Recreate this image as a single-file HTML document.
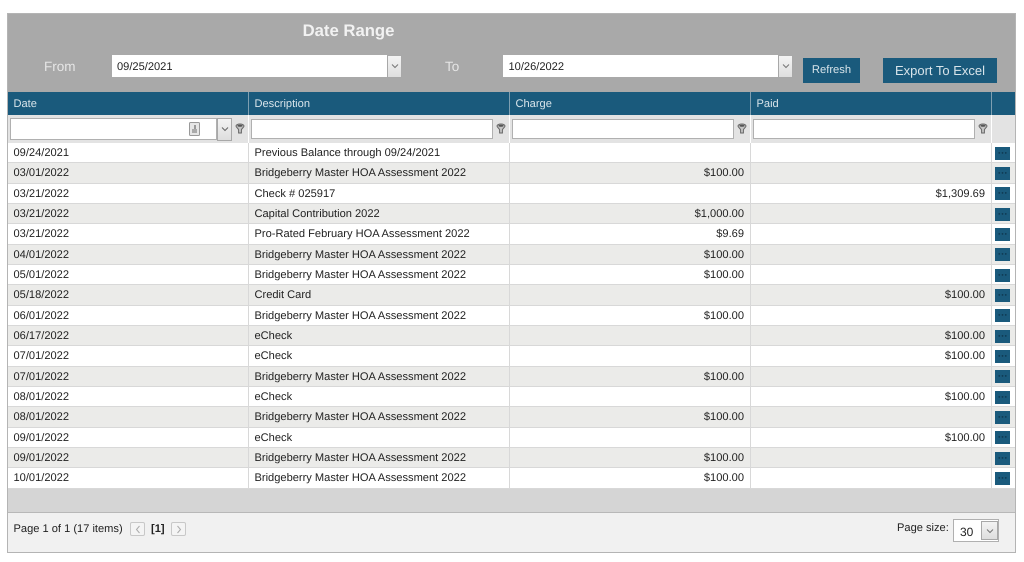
<!DOCTYPE html>
<html><head><meta charset="utf-8">
<style>
html,body{margin:0;padding:0;background:#fff;width:1024px;height:562px;overflow:hidden}
*{box-sizing:border-box}
body{font-family:"Liberation Sans",sans-serif;font-size:11.1px;color:#222;text-rendering:geometricPrecision}
.a{position:absolute}
#wrap{position:absolute;left:0;top:0;width:1024px;height:562px;filter:blur(.35px)}
#frame{position:absolute;left:7px;top:13px;width:1009px;height:540px;border:1px solid #b4b4b4;background:#f1f1f1}
.hdr{position:absolute;top:92px;height:23px;background:#1a5a7c;color:#d8e4ea;line-height:25px;padding-left:5.5px;border-right:1px solid #7f9fb1}
.fb{position:absolute;top:115px;height:28px;background:#e3e3e3;border-right:1px solid #fff}
.inp{position:absolute;top:119px;height:20px;background:#fff;border:1px solid #b0b0b0}
.row{position:absolute;left:8px;width:1007px;height:20.33px;background:#fff;border-bottom:1px solid #d8d8d8;line-height:20px}
.row.alt{background:#ebebe9}
.row span{position:absolute;top:0;white-space:nowrap}
.c1{left:5.5px}.c2{left:246.5px}
.c3{right:271px}.c4{right:30px}
.dots{position:absolute;left:987px;top:3.5px;width:15px;height:13px;background:#1a5a7c;color:#0f3a52;text-align:center;font-size:6.5px;line-height:13px;font-style:normal;letter-spacing:1px;padding-left:1px}
.dd{position:absolute;background:linear-gradient(#f3f3f3,#dedede);border:1px solid #a8a8a8}
.dd svg{position:absolute;left:50%;top:50%;margin:-3px 0 0 -4px}
.btn{position:absolute;background:#1a5a7c;color:#d8e4ea;text-align:center}
</style></head><body>
<div id="wrap">
<div id="frame"></div>
<div class="a" style="left:8px;top:14px;width:1007px;height:78px;background:#a9a9a9"></div>
<div class="a" style="left:8px;top:20.5px;width:681px;text-align:center;font-size:16.7px;font-weight:bold;color:#f2f2f2;line-height:19px">Date Range</div>
<div class="a" style="left:44px;top:58px;font-size:13.5px;color:#e6e6e6;line-height:17px">From</div>
<div class="a" style="left:445px;top:58px;font-size:13.5px;color:#e6e6e6;line-height:17px">To</div>

<div class="a" style="left:112px;top:55px;width:276px;height:22px;background:#fff;padding-left:5px;line-height:24px">09/25/2021</div>
<div class="dd" style="left:387px;top:54.5px;width:15px;height:23px"><svg width="8" height="6"><path d="M1 1.5L4 4.5L7 1.5" fill="none" stroke="#777" stroke-width="1"/></svg></div>
<div class="a" style="left:503px;top:55px;width:276px;height:22px;background:#fff;padding-left:5.5px;line-height:24px">10/26/2022</div>
<div class="dd" style="left:778px;top:54.5px;width:15px;height:23px"><svg width="8" height="6"><path d="M1 1.5L4 4.5L7 1.5" fill="none" stroke="#777" stroke-width="1"/></svg></div>

<div class="btn" style="left:803px;top:58px;width:57px;height:25px;line-height:25px;font-size:11.2px">Refresh</div>
<div class="btn" style="left:883px;top:58px;width:114px;height:25px;line-height:25px;font-size:13px">Export To Excel</div>

<div class="hdr" style="left:8px;width:241px">Date</div>
<div class="hdr" style="left:249px;width:261px">Description</div>
<div class="hdr" style="left:510px;width:241px">Charge</div>
<div class="hdr" style="left:751px;width:241px">Paid</div>
<div class="hdr" style="left:992px;width:23px;border-right:0"></div>

<div class="fb" style="left:8px;width:241px"></div>
<div class="fb" style="left:249px;width:261px"></div>
<div class="fb" style="left:510px;width:241px"></div>
<div class="fb" style="left:751px;width:241px"></div>
<div class="fb" style="left:992px;width:23px;border-right:0"></div>

<div class="inp" style="left:10px;top:118px;width:207px;height:22px"></div>
<div class="a" style="left:189px;top:122px;width:11px;height:14px;background:#e6e6e6;border:1px solid #999;border-radius:1.5px"></div>
<div class="a" style="left:193.5px;top:125px;width:2px;height:4px;background:#999"></div>
<div class="a" style="left:192px;top:129px;width:5px;height:4px;background:#aaa"></div>
<div class="dd" style="left:217px;top:117.5px;width:15px;height:23px"><svg width="8" height="6"><path d="M1 1.5L4 4.5L7 1.5" fill="none" stroke="#666" stroke-width="1"/></svg></div>
<div class="inp" style="left:251px;width:242px"></div>
<div class="inp" style="left:512px;width:222px"></div>
<div class="inp" style="left:753px;width:222px"></div>

<svg class="a" style="left:235px;top:123px" width="10" height="11" viewBox="0 0 10 11"><path d="M1 3a4 2 0 0 1 8 0c0 1.5-2.6 2.5-2.6 4v3h-2.8V7C3.6 5.500 1 4.500 1 3z" fill="#c4c4c4" stroke="#666" stroke-width="1"/><ellipse cx="5" cy="2.800" rx="2.600" ry="1" fill="#555"/></svg>
<svg class="a" style="left:496px;top:123px" width="10" height="11" viewBox="0 0 10 11"><path d="M1 3a4 2 0 0 1 8 0c0 1.5-2.6 2.5-2.6 4v3h-2.8V7C3.6 5.500 1 4.500 1 3z" fill="#c4c4c4" stroke="#666" stroke-width="1"/><ellipse cx="5" cy="2.800" rx="2.600" ry="1" fill="#555"/></svg>
<svg class="a" style="left:737px;top:123px" width="10" height="11" viewBox="0 0 10 11"><path d="M1 3a4 2 0 0 1 8 0c0 1.5-2.6 2.5-2.6 4v3h-2.8V7C3.6 5.500 1 4.500 1 3z" fill="#c4c4c4" stroke="#666" stroke-width="1"/><ellipse cx="5" cy="2.800" rx="2.600" ry="1" fill="#555"/></svg>
<svg class="a" style="left:978px;top:123px" width="10" height="11" viewBox="0 0 10 11"><path d="M1 3a4 2 0 0 1 8 0c0 1.5-2.6 2.5-2.6 4v3h-2.8V7C3.6 5.500 1 4.500 1 3z" fill="#c4c4c4" stroke="#666" stroke-width="1"/><ellipse cx="5" cy="2.800" rx="2.600" ry="1" fill="#555"/></svg>

<div class="row" style="top:143px"><span class="c1">09/24/2021</span><span class="c2">Previous Balance through 09/24/2021</span><i class="dots">•••</i></div>
<div class="row alt" style="top:163.3px"><span class="c1">03/01/2022</span><span class="c2">Bridgeberry Master HOA Assessment 2022</span><span class="c3">$100.00</span><i class="dots">•••</i></div>
<div class="row" style="top:183.7px"><span class="c1">03/21/2022</span><span class="c2">Check # 025917</span><span class="c4">$1,309.69</span><i class="dots">•••</i></div>
<div class="row alt" style="top:204px"><span class="c1">03/21/2022</span><span class="c2">Capital Contribution 2022</span><span class="c3">$1,000.00</span><i class="dots">•••</i></div>
<div class="row" style="top:224.3px"><span class="c1">03/21/2022</span><span class="c2">Pro-Rated February HOA Assessment 2022</span><span class="c3">$9.69</span><i class="dots">•••</i></div>
<div class="row alt" style="top:244.7px"><span class="c1">04/01/2022</span><span class="c2">Bridgeberry Master HOA Assessment 2022</span><span class="c3">$100.00</span><i class="dots">•••</i></div>
<div class="row" style="top:265px"><span class="c1">05/01/2022</span><span class="c2">Bridgeberry Master HOA Assessment 2022</span><span class="c3">$100.00</span><i class="dots">•••</i></div>
<div class="row alt" style="top:285.3px"><span class="c1">05/18/2022</span><span class="c2">Credit Card</span><span class="c4">$100.00</span><i class="dots">•••</i></div>
<div class="row" style="top:305.7px"><span class="c1">06/01/2022</span><span class="c2">Bridgeberry Master HOA Assessment 2022</span><span class="c3">$100.00</span><i class="dots">•••</i></div>
<div class="row alt" style="top:326px"><span class="c1">06/17/2022</span><span class="c2">eCheck</span><span class="c4">$100.00</span><i class="dots">•••</i></div>
<div class="row" style="top:346.3px"><span class="c1">07/01/2022</span><span class="c2">eCheck</span><span class="c4">$100.00</span><i class="dots">•••</i></div>
<div class="row alt" style="top:366.7px"><span class="c1">07/01/2022</span><span class="c2">Bridgeberry Master HOA Assessment 2022</span><span class="c3">$100.00</span><i class="dots">•••</i></div>
<div class="row" style="top:387px"><span class="c1">08/01/2022</span><span class="c2">eCheck</span><span class="c4">$100.00</span><i class="dots">•••</i></div>
<div class="row alt" style="top:407.3px"><span class="c1">08/01/2022</span><span class="c2">Bridgeberry Master HOA Assessment 2022</span><span class="c3">$100.00</span><i class="dots">•••</i></div>
<div class="row" style="top:427.7px"><span class="c1">09/01/2022</span><span class="c2">eCheck</span><span class="c4">$100.00</span><i class="dots">•••</i></div>
<div class="row alt" style="top:448px"><span class="c1">09/01/2022</span><span class="c2">Bridgeberry Master HOA Assessment 2022</span><span class="c3">$100.00</span><i class="dots">•••</i></div>
<div class="row" style="top:468.3px"><span class="c1">10/01/2022</span><span class="c2">Bridgeberry Master HOA Assessment 2022</span><span class="c3">$100.00</span><i class="dots">•••</i></div>

<div class="a" style="left:248px;top:143px;width:1px;height:346px;background:#d8d8d8"></div>
<div class="a" style="left:509px;top:143px;width:1px;height:346px;background:#d8d8d8"></div>
<div class="a" style="left:750px;top:143px;width:1px;height:346px;background:#d8d8d8"></div>
<div class="a" style="left:991px;top:143px;width:1px;height:346px;background:#d8d8d8"></div>

<div class="a" style="left:8px;top:489px;width:1007px;height:24px;background:#d5d5d5;border-bottom:1px solid #b8b8b8"></div>

<div class="a" style="left:13.5px;top:521.5px;line-height:15px;white-space:nowrap">Page 1 of 1 (17 items)</div>
<div class="a" style="left:130px;top:522px;width:15px;height:14px;border:1px solid #c8c8c8;border-radius:2px;background:#f4f4f4"><svg class="a" style="left:4px;top:2px" width="6" height="9"><path d="M4.500 1L1.500 4.500L4.500 8" fill="none" stroke="#aaa"/></svg></div>
<div class="a" style="left:151px;top:521.5px;line-height:15px;font-weight:bold">[1]</div>
<div class="a" style="left:171px;top:522px;width:15px;height:14px;border:1px solid #c8c8c8;border-radius:2px;background:#f4f4f4"><svg class="a" style="left:4px;top:2px" width="6" height="9"><path d="M1.500 1L4.500 4.500L1.500 8" fill="none" stroke="#aaa"/></svg></div>

<div class="a" style="left:897px;top:521px;line-height:15px;white-space:nowrap">Page size:</div>
<div class="a" style="left:953px;top:519px;width:46px;height:23px;background:#fff;border:1px solid #b0b0b0;padding-left:6px;line-height:24px;font-size:12px">30</div>
<div class="dd" style="left:981px;top:521px;width:17px;height:19px"><svg width="8" height="6"><path d="M1 1.500L4 4.500L7 1.500" fill="none" stroke="#777" stroke-width="1"/></svg></div>
</div>
</body></html>
